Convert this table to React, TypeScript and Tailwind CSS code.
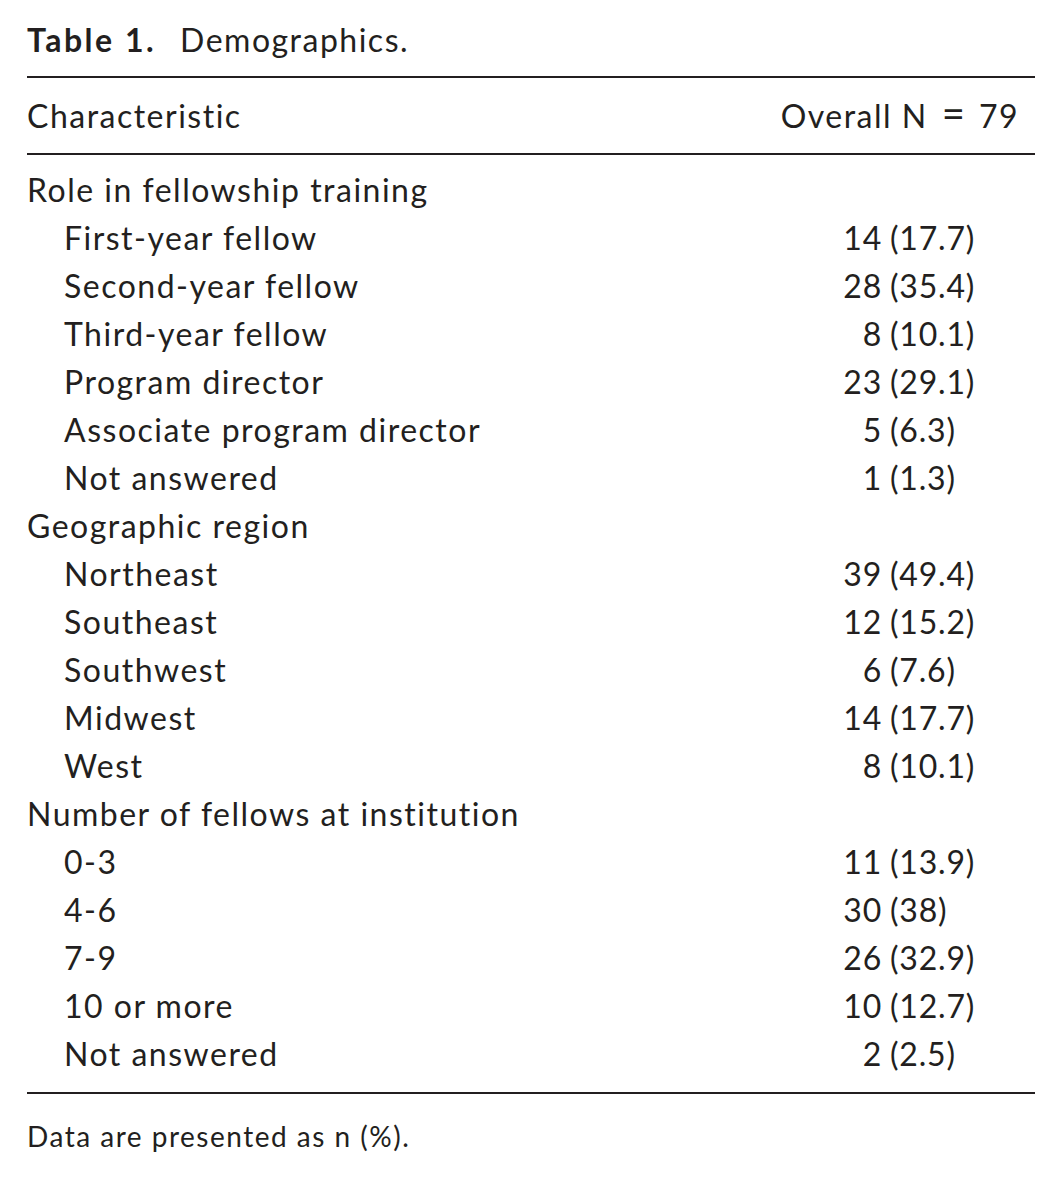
import React from "react";

type Row = { label: string; n?: string; p?: string; indent?: boolean };

const rows: Row[] = [
  { label: "Role in fellowship training" },
  { label: "First-year fellow", n: "14", p: "(17.7)", indent: true },
  { label: "Second-year fellow", n: "28", p: "(35.4)", indent: true },
  { label: "Third-year fellow", n: "8", p: "(10.1)", indent: true },
  { label: "Program director", n: "23", p: "(29.1)", indent: true },
  { label: "Associate program director", n: "5", p: "(6.3)", indent: true },
  { label: "Not answered", n: "1", p: "(1.3)", indent: true },
  { label: "Geographic region" },
  { label: "Northeast", n: "39", p: "(49.4)", indent: true },
  { label: "Southeast", n: "12", p: "(15.2)", indent: true },
  { label: "Southwest", n: "6", p: "(7.6)", indent: true },
  { label: "Midwest", n: "14", p: "(17.7)", indent: true },
  { label: "West", n: "8", p: "(10.1)", indent: true },
  { label: "Number of fellows at institution" },
  { label: "0-3", n: "11", p: "(13.9)", indent: true },
  { label: "4-6", n: "30", p: "(38)", indent: true },
  { label: "7-9", n: "26", p: "(32.9)", indent: true },
  { label: "10 or more", n: "10", p: "(12.7)", indent: true },
  { label: "Not answered", n: "2", p: "(2.5)", indent: true },
];

export default function App() {
  return (
    <div
      className="w-[1061px] h-[1179px] bg-white text-[#231f20] text-[32px] leading-[48px] pl-[27px] pr-[26px] pt-[16px]"
      style={{ fontFamily: "Lato, 'Open Sans', sans-serif" }}
    >
      <div className="flex">
        <span className="font-bold tracking-[2.5px]">Table 1.</span>
        <span className="ml-[24px] tracking-[1.5px]">Demographics.</span>
      </div>
      <div className="mt-[12px] h-[2px] bg-[#231f20]" />
      <div className="flex h-[75px] pt-[14px] tracking-[1.5px]">
        <div className="flex-1">Characteristic</div>
        <div className="pr-[16px] flex items-baseline h-[48px]">
          <span>Overall N</span>
          <span className="mx-[14px] text-[40px] leading-[36px] tracking-normal">=</span>
          <span>79</span>
        </div>
      </div>
      <div className="h-[2px] bg-[#231f20]" />
      <div className="pt-[11px] pb-[14px]">
        {rows.map((r, i) => (
          <div key={i} className="flex">
            <div className={r.indent ? "flex-1 pl-[37px] tracking-[1.5px]" : "flex-1 tracking-[1.5px]"}>
              {r.label}
            </div>
            {r.n ? (
              <div className="flex w-[255px] tracking-[0.8px]">
                <span className="w-[102px] text-right">{r.n}</span>
                <span className="pl-[8px]">{r.p}</span>
              </div>
            ) : null}
          </div>
        ))}
      </div>
      <div className="h-[2px] bg-[#231f20]" />
      <div className="mt-[18px] text-[28px] leading-[48px] tracking-[1.5px]">Data are presented as n (%).</div>
    </div>
  );
}
